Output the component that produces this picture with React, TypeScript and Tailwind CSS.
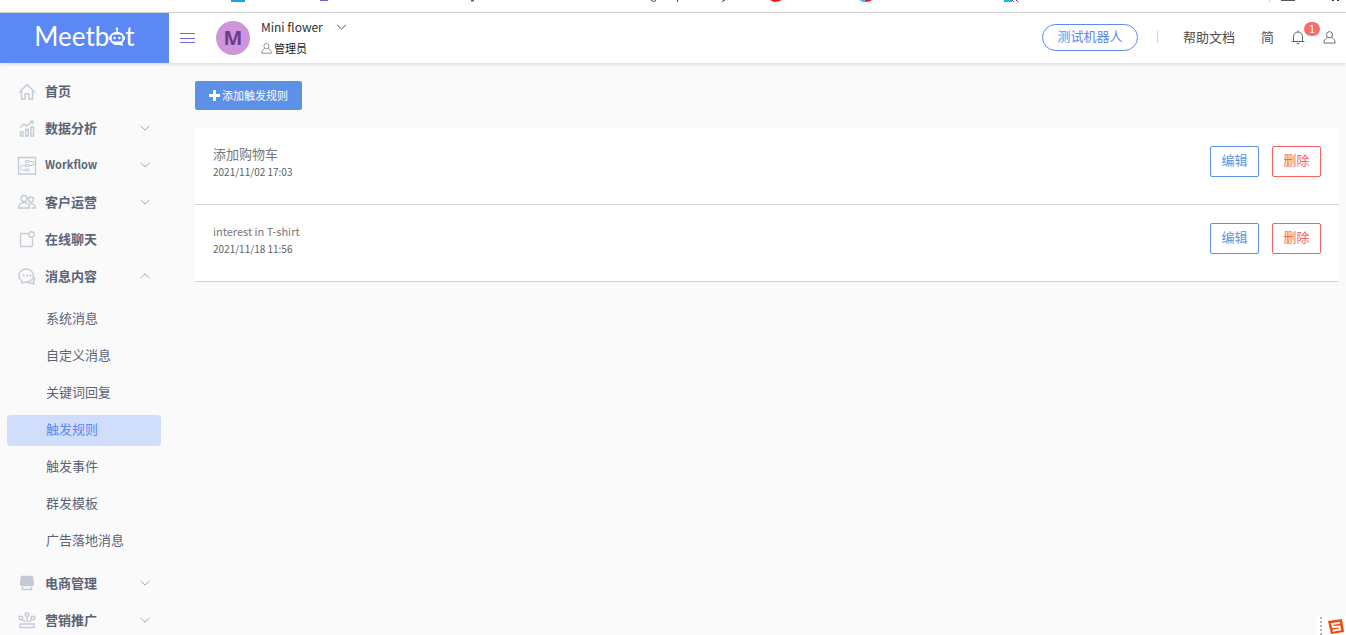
import type { ReactNode } from "react";
import { clsx } from "clsx";

interface NavItem {
  label: string;
  icon: ReactNode;
  open?: boolean;
  expandable?: boolean;
  children?: string[];
}

interface Rule {
  id: number;
  name: string;
  createdAt: string;
}

const HomeIcon = () => (
  <>
    <path d="M2 11.5 L10 3.5 L18 11.5" />
    <path d="M4.5 10 V18 H8 V13 H12 V18 H15.5 V10" />
  </>
);

const ChartIcon = () => (
  <>
    <path d="M3.5 14 H6 V18 H3.5 Z M8.7 11.5 H11.3 V18 H8.7 Z M14 9 H16.5 V18 H14 Z" />
    <path d="M3 9.5 L7 6 L9.5 8 L15.5 3.5 M12.8 3.2 H16 V6" />
  </>
);

const WorkflowIcon = () => (
  <>
    <path d="M1.5 2.5 H18.5 V19 H1.5 Z" />
    <path d="M8.5 5.5 H12 V7.5 H8.5 Z M8.5 9.5 H12 V11.5 H8.5 Z M8.5 14 H12 V16 H8.5 Z" strokeWidth="1" />
    <path d="M12 6.5 H15 A2 2 0 0 1 15 10.5 H12 M8.5 10.5 H5.5 A2.2 2.2 0 0 0 5.5 15 H8.5" strokeWidth="1" />
  </>
);

const UsersIcon = () => (
  <>
    <circle cx="7" cy="6.5" r="3" />
    <circle cx="14" cy="7.5" r="2.5" />
    <path d="M1.5 16 C1.5 12.5 4 10.5 7 10.5 C10 10.5 12.5 12.5 12.5 16 Z" />
    <path d="M12.5 11.8 C16 11 18.5 13 18.5 16 H14.5" />
  </>
);

const ChatIcon = () => (
  <>
    <path d="M11 4.5 H4.5 A1.2 1.2 0 0 0 3.5 6 V16 A1.5 1.5 0 0 0 5 17.5 H14 A1.5 1.5 0 0 0 15.5 16 V9.5" />
    <circle cx="14.5" cy="5.5" r="2.7" />
  </>
);

const MessageIcon = () => (
  <>
    <path d="M4.5 14.5 A7.3 6.5 0 1 1 10 16 L5 17 Z" />
    <path d="M17.3 11 C18 13 17.3 14.5 16.3 15.3 L17 17.8 L14 16.8 C12.5 17.3 11 17.3 9.8 16.5" />
    <path d="M5.8 9.5 H7.5 M9.2 9.5 H10.9 M12.6 9.5 H14.3" strokeWidth="1.8" />
  </>
);

const ShopIcon = () => (
  <>
    <path d="M4.5 3.5 H15.5 L16.5 11 A1.5 1.5 0 0 1 15 12.5 H5 A1.5 1.5 0 0 1 3.5 11 Z" fill="currentColor" />
    <path d="M5.5 13.5 V16.5 H14.5 V13.5" />
  </>
);

const PromoteIcon = () => (
  <>
    <path d="M3 14 H17 V17.5 H3 Z" />
    <circle cx="10" cy="4.5" r="1.8" />
    <circle cx="4" cy="8" r="1.8" />
    <circle cx="16" cy="8" r="1.8" />
    <path d="M10 6.3 V12 M5.2 9.5 C6 11 7.5 11.5 8.5 11.5 M14.8 9.5 C14 11 12.5 11.5 11.5 11.5" />
  </>
);

const NAV: NavItem[] = [
  { label: "首页", icon: <HomeIcon /> },
  { label: "数据分析", icon: <ChartIcon />, expandable: true },
  { label: "Workflow", icon: <WorkflowIcon />, expandable: true },
  { label: "客户运营", icon: <UsersIcon />, expandable: true },
  { label: "在线聊天", icon: <ChatIcon /> },
  {
    label: "消息内容",
    icon: <MessageIcon />,
    expandable: true,
    open: true,
    children: ["系统消息", "自定义消息", "关键词回复", "触发规则", "触发事件", "群发模板", "广告落地消息"],
  },
  { label: "电商管理", icon: <ShopIcon />, expandable: true },
  { label: "营销推广", icon: <PromoteIcon />, expandable: true },
];

const RULES: Rule[] = [
  { id: 1, name: "添加购物车", createdAt: "2021/11/02 17:03" },
  { id: 2, name: "interest in T-shirt", createdAt: "2021/11/18 11:56" },
];

// latin labels are set smaller so they sit evenly beside the Chinese ones
const labelSize = (text: string) => (/^[\x20-\x7e]+$/.test(text) ? "text-[11px]" : "text-[13px]");

function Chevron({ up, className }: { up?: boolean; className?: string }) {
  return (
    <svg viewBox="0 0 10 6" fill="none" stroke="currentColor" className={clsx("shrink-0", up && "rotate-180", className)}>
      <path d="M0.5 0.8 L5 5 L9.5 0.8" />
    </svg>
  );
}

function PersonIcon({ className }: { className?: string }) {
  return (
    <svg viewBox="0 0 14 14" fill="none" stroke="currentColor" className={className}>
      <circle cx="7" cy="4" r="3.3" />
      <path d="M4.8 7 C2.3 8.2 1 10 0.9 13 H13.1 C13 10 11.7 8.2 9.2 7" />
    </svg>
  );
}

// slice of the browser's bookmark row above the page
function BookmarkEdge() {
  return (
    <div className="h-[13px] shrink-0 border-b border-[#d9d9d9] bg-white">
      <svg width="1346" height="3" viewBox="0 0 1346 3" className="block">
        <rect x="231" width="14" height="2" fill="#1e9fe8" />
        <path d="M320 0 H328 V1 H320 Z" fill="#6a63d8" />
        <rect x="471" width="3" height="1.5" fill="#2e8b2e" />
        <path d="M651 0.5 Q654 2.5 656 0.5" fill="none" stroke="#444" />
        <rect x="677" width="1" height="2" fill="#444" />
        <path d="M722 1.5 L725 0" fill="none" stroke="#444" />
        <path d="M770 0 H782 Q779 2 774 2 Z" fill="#e5201c" />
        <path d="M859 0 H866 V2 H863 Z" fill="#43b4f5" />
        <path d="M865 0 H872 Q870 2 866 2 Z" fill="#e5201c" />
        <rect x="1004" width="8" height="2" fill="#16bfe0" />
        <path d="M1012 0 L1014 2 M1016 0 L1018 2" stroke="#5b2ca0" />
        <rect x="1269" width="1" height="2" fill="#ccc" />
        <rect x="1281" width="14" height="1" fill="#555" />
        <path d="M1332 0 H1334 V1 H1332 Z M1337 0 H1339 V1 H1337 Z" fill="#333" />
      </svg>
    </div>
  );
}

function Logo() {
  return (
    <div className="flex h-full w-[169px] shrink-0 items-center justify-center bg-[#5a88f4] pb-1 text-white" aria-label="Meetbot">
      <span className="font-['Lato'] text-[26px] leading-8">Meetb</span>
      <svg viewBox="0 0 16 20" className="mt-[2px] h-5 w-4">
        <path d="M8 1 V5" stroke="white" strokeWidth="1.4" />
        <circle cx="8" cy="1.6" r="1.2" fill="white" />
        <path d="M3.5 7 Q8 2 12.5 7 Z" fill="white" />
        <rect x="1.8" y="6.5" width="12.4" height="9.5" rx="4" fill="none" stroke="white" strokeWidth="1.8" />
        <path d="M0.7 9.5 V13 M15.3 9.5 V13" stroke="white" strokeWidth="1.2" />
        <circle cx="5.6" cy="11" r="1.2" fill="white" />
        <circle cx="10.4" cy="11" r="1.2" fill="white" />
        <path d="M3 14.5 H13 L14 19 L10.5 18 H6 Q3.5 17.5 3 14.5 Z" fill="white" />
      </svg>
      <span className="font-['Lato'] text-[26px] leading-8">t</span>
    </div>
  );
}

function Header() {
  return (
    <header className="relative z-10 flex h-[50px] shrink-0 items-center bg-white shadow-[0_1px_4px_rgba(0,0,0,0.15)]">
      <Logo />
      <button aria-label="菜单" className="ml-[11px]">
        <svg viewBox="0 0 15 12" fill="none" stroke="#6f67ea" className="h-3 w-[15px]">
          <path d="M0 1.5 H15 M0 6.5 H15 M0 10.5 H15" />
        </svg>
      </button>
      <div className="ml-[21px] flex size-[34px] items-center justify-center rounded-full bg-[#cf95da] font-['Noto_Sans'] text-[20px] leading-8 font-bold text-[#6b3d8c]">
        M
      </div>
      <div className="ml-[11px] pb-[2px] text-[#303133]">
        <button className="flex h-[22px] items-center text-[12px]">
          Mini flower
          <Chevron className="ml-[13px] h-[6px] w-[11px] text-[#555]" />
        </button>
        <div className="flex h-5 items-center text-[11px] text-[#222]">
          <PersonIcon className="mr-[2px] size-[11px] text-[#777]" />
          管理员
        </div>
      </div>
      <div className="ml-auto flex items-center pr-[10px] pb-[2px] text-[13px] text-[#4d4d4d]">
        <button className="h-[27px] w-24 rounded-full border border-[#5a88f4] pb-[2px] leading-5 text-[#5a88f4]">测试机器人</button>
        <span className="ml-[19px] h-3 w-px bg-[#b3dcdc]" />
        <a href="#docs" className="ml-[25px]">帮助文档</a>
        <button className="ml-[26px]">简</button>
        <button aria-label="通知" className="relative ml-[17px]">
          <svg viewBox="0 0 14 15" fill="none" stroke="#666" className="h-[15px] w-[14px]">
            <path d="M7 0.5 V2 M0.5 11.5 H13.5 M2.5 11.5 V7 C2.5 0.4 11.5 0.4 11.5 7 V11.5 M5.5 13 Q7 14.8 8.5 13" />
          </svg>
          <span className="absolute -top-2 left-[13px] flex h-[14px] w-4 items-center justify-center rounded-full bg-[#f56c6c] text-[10px] text-white">
            1
          </span>
        </button>
        <button aria-label="账户" className="ml-[18px]">
          <PersonIcon className="size-[13px] text-[#666]" />
        </button>
      </div>
    </header>
  );
}

function Sidebar() {
  return (
    <nav className="w-[169px] shrink-0 pt-[9px] text-[#5b6477]">
      {NAV.map((item) => (
        <div key={item.label}>
          <button className={clsx("flex h-[37px] w-full items-center pr-[19px] pl-[17px] font-bold", labelSize(item.label))}>
            <svg
              viewBox="0 0 20 20"
              fill="none"
              stroke="currentColor"
              strokeWidth="1.4"
              className="mr-2 size-5 shrink-0 text-[#c3cbd8]"
            >
              {item.icon}
            </svg>
            {item.label}
            {item.expandable && <Chevron up={item.open} className="ml-auto h-[6px] w-[10px] text-[#a5abb6]" />}
          </button>
          {item.children && (
            <div className="flex flex-col gap-[6px] pt-[10px] pb-[7px]">
              {item.children.map((child) => (
                <a
                  key={child}
                  href="#rules"
                  className={clsx(
                    "mr-2 ml-[7px] flex h-[31px] items-center rounded pb-1 pl-[39px] text-[13px]",
                    child === "触发规则" && "bg-[#d0defb] text-[#5a88f4]"
                  )}
                >
                  {child}
                </a>
              ))}
            </div>
          )}
        </div>
      ))}
    </nav>
  );
}

function RuleRow({ rule }: { rule: Rule }) {
  return (
    <li className="flex h-[77px] items-start justify-between border-b border-[#cfd3dc] bg-white px-[18px] pt-[18px]">
      <div>
        <p className={clsx("leading-4 text-[#777]", labelSize(rule.name))}>{rule.name}</p>
        <p className="text-[10px] leading-5 text-[#606266]">{rule.createdAt}</p>
      </div>
      <div className="flex gap-[13px] text-[13px] leading-5">
        <button className="h-[31px] w-[49px] rounded-[2px] border border-[#5c91e6] pb-1 text-[#5c91e6]">编辑</button>
        <button className="h-[31px] w-[49px] rounded-[2px] border border-[#fb6060] pb-1 text-[#fb6060]">删除</button>
      </div>
    </li>
  );
}

export default function App() {
  return (
    <div className="flex h-screen flex-col overflow-hidden bg-[#fafafa] font-['Noto_Sans_CJK_SC',sans-serif]">
      <BookmarkEdge />
      <Header />
      <div className="flex min-h-0 flex-1">
        <Sidebar />
        <main className="min-w-0 flex-1 pt-[18px] pr-[7px] pl-[26px]">
          <button className="flex h-[29px] w-[107px] items-center justify-center gap-[2px] rounded-[2px] bg-[#5c91e6] text-[11px] text-white">
            <svg viewBox="0 0 11 11" className="size-[11px]">
              <path d="M5.5 0 V11 M0 5.5 H11" stroke="white" strokeWidth="3" />
            </svg>
            添加触发规则
          </button>
          <ul className="mt-[18px]">
            {RULES.map((rule) => (
              <RuleRow key={rule.id} rule={rule} />
            ))}
          </ul>
        </main>
      </div>
      <div className="fixed right-0 bottom-0 z-20 flex h-[19px] w-[30px] items-center bg-white">
        <svg viewBox="0 0 30 19" className="h-[19px] w-[30px]">
          <path d="M5 1 V19" stroke="#b5b5b5" strokeWidth="2" strokeDasharray="2 2" />
          <path d="M12 5 L26 3 L28 16 L15 18 Z" fill="#f04a10" />
          <path d="M24 6.8 L16 8 L17 11 L23.5 10.5 L24 13.5 L16.5 14.8" fill="none" stroke="white" strokeWidth="2" />
        </svg>
      </div>
    </div>
  );
}
